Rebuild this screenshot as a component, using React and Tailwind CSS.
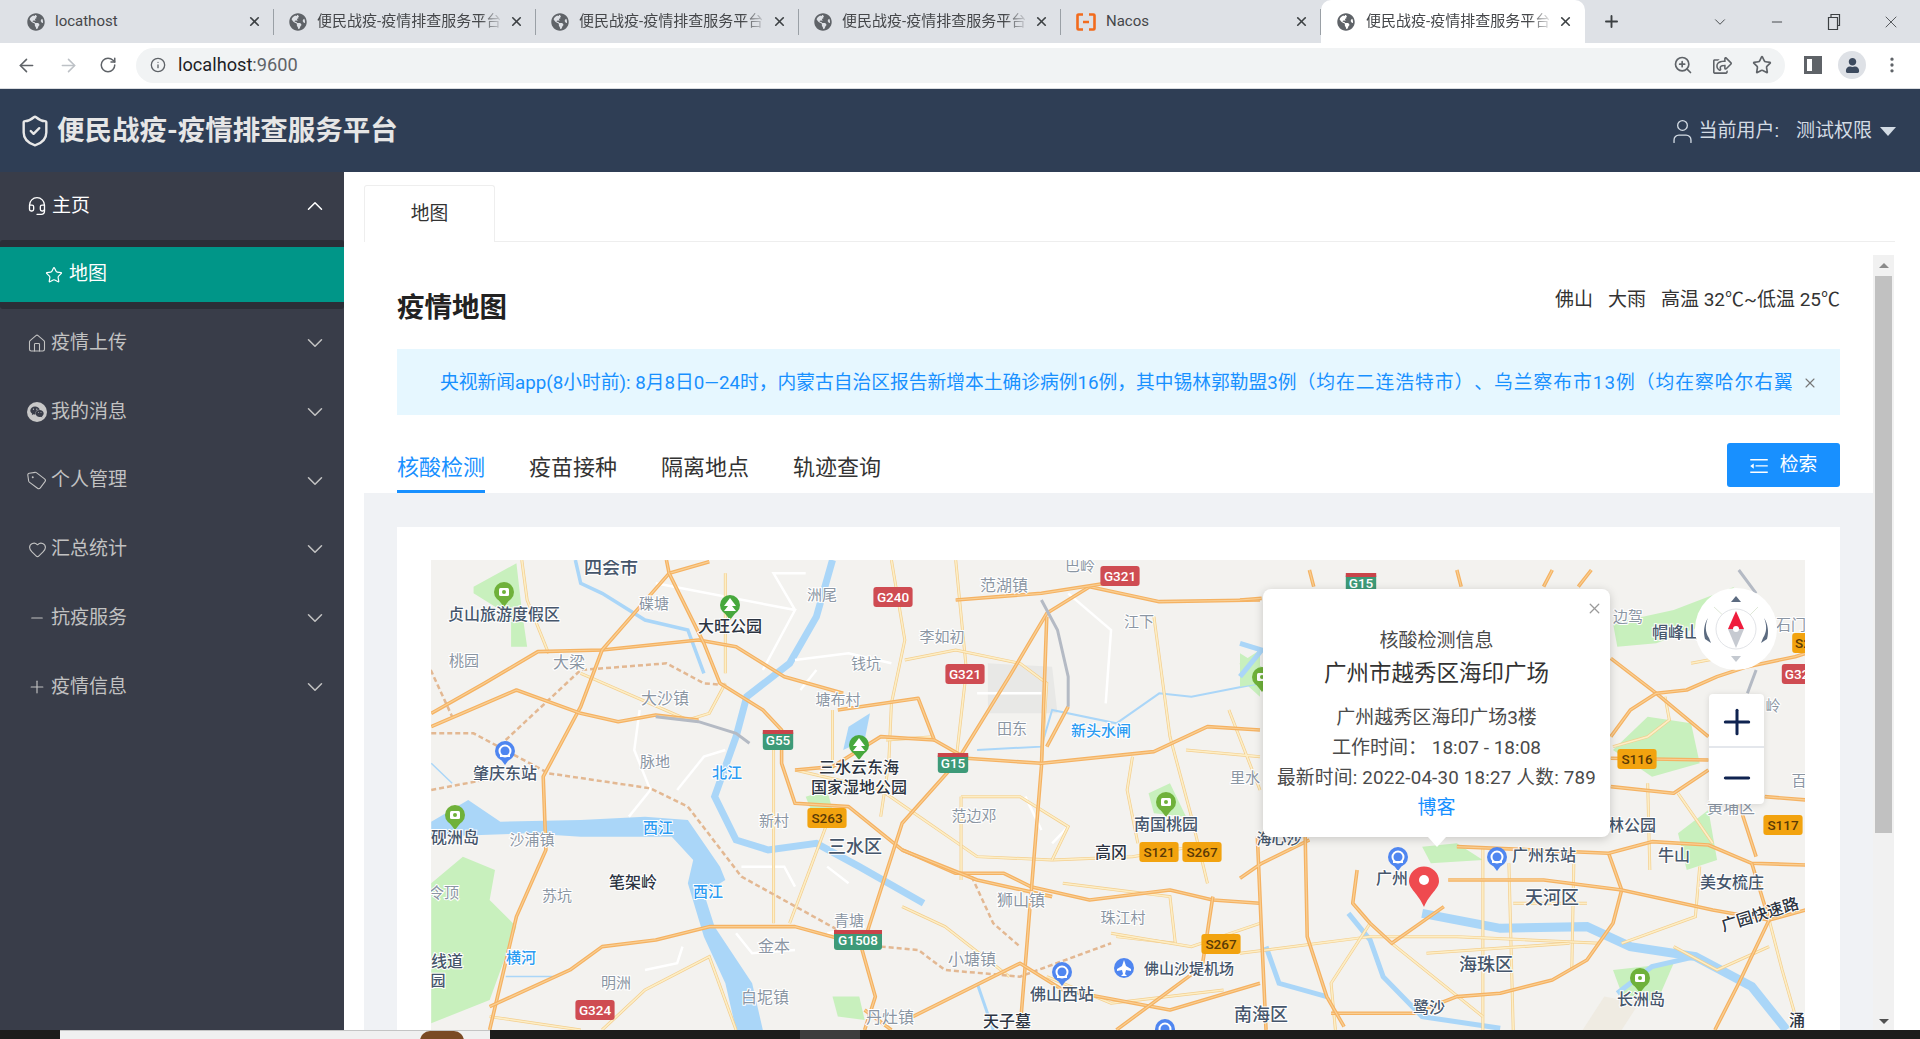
import {
  ArrowLeft,
  ArrowRight,
  ChevronDown,
  ChevronUp,
  Heart,
  Headset,
  House,
  Info,
  Minus,
  MoreVertical,
  Plus,
  RotateCw,
  ShieldCheck,
  Star,
  Tag,
  User,
  X,
  ZoomIn,
} from "lucide-react";
import { FaGlobeAmericas, FaRegShareSquare, FaUser, FaWeixin } from "react-icons/fa";

const cjk = "font-['Roboto','Noto_Sans_CJK_SC',sans-serif]";
const title = "便民战疫-疫情排查服务平台";

const browserTabs = [
  { label: "locathost", width: "w-[262px]", plain: true },
  { label: title, width: "w-[262px]" },
  { label: title, width: "w-[263px]" },
  { label: title, width: "w-[262px]" },
  { label: "Nacos", width: "w-[260px]", nacos: true, plain: true },
];

const menu = [
  { label: "疫情上传", icon: <House size={23} strokeWidth={1.3} /> },
  {
    label: "我的消息",
    icon: (
      <span className="flex h-[20px] w-[20px] items-center justify-center rounded-full bg-[#c8c8c8] text-[#393d49]">
        <FaWeixin size={14} />
      </span>
    ),
  },
  { label: "个人管理", icon: <Tag size={21} strokeWidth={1.3} className="rotate-[-8deg]" /> },
  { label: "汇总统计", icon: <Heart size={19} strokeWidth={1.4} /> },
  { label: "抗疫服务", icon: <Minus size={18} strokeWidth={1.5} /> },
  { label: "疫情信息", icon: <Plus size={20} strokeWidth={1.4} /> },
];

const labels = [
  ["四会市", 611, 574, 18, "d"],
  ["贞山旅游度假区", 504, 620, 16, "d"],
  ["桃园", 464, 666, 15, "g"],
  ["大梁", 569, 668, 16, "g"],
  ["碟塘", 654, 609, 15, "g"],
  ["大旺公园", 730, 632, 16, "k"],
  ["洲尾", 822, 600, 15, "g"],
  ["范湖镇", 1004, 591, 16, "g"],
  ["巴岭", 1080, 571, 15, "g"],
  ["李如初", 942, 642, 15, "g"],
  ["钱坑", 866, 669, 15, "g"],
  ["江下", 1139, 627, 15, "g"],
  ["塘布村", 838, 705, 15, "g"],
  ["大沙镇", 665, 704, 16, "g"],
  ["田东", 1012, 734, 15, "g"],
  ["新头水闸", 1101, 736, 15, "b"],
  ["脉地", 655, 767, 15, "g"],
  ["北江", 727, 778, 15, "b"],
  ["肇庆东站", 505, 779, 16, "d"],
  ["三水云东海", 859, 773, 16, "k"],
  ["国家湿地公园", 859, 793, 16, "k"],
  ["里水", 1245, 783, 15, "g"],
  ["范边邓", 974, 821, 15, "g"],
  ["南国桃园", 1166, 830, 16, "d"],
  ["砚洲岛", 455, 843, 16, "d"],
  ["沙浦镇", 532, 845, 15, "g"],
  ["西江", 658, 833, 15, "b"],
  ["新村", 774, 826, 15, "g"],
  ["三水区", 855, 853, 18, "d"],
  ["高冈", 1111, 858, 16, "k"],
  ["笔架岭", 633, 888, 16, "k"],
  ["苏坑", 557, 901, 15, "g"],
  ["西江", 708, 897, 15, "b"],
  ["令顶", 444, 898, 15, "g"],
  ["狮山镇", 1021, 906, 16, "g"],
  ["珠江村", 1123, 923, 15, "g"],
  ["青塘", 849, 926, 15, "g"],
  ["金本", 774, 952, 16, "g"],
  ["小塘镇", 972, 965, 16, "g"],
  ["佛山沙堤机场", 1189, 974, 15, "d"],
  ["横河", 521, 963, 15, "b"],
  ["线道", 447, 967, 16, "d"],
  ["园", 438, 986, 15, "d"],
  ["明洲", 616, 988, 15, "g"],
  ["佛山西站", 1062, 1000, 16, "d"],
  ["白坭镇", 765, 1003, 16, "g"],
  ["丹灶镇", 890, 1023, 16, "g"],
  ["天子墓", 1007, 1027, 16, "k"],
  ["南海区", 1261, 1021, 18, "d"],
  ["边驾", 1628, 622, 15, "g"],
  ["帽峰山", 1676, 638, 16, "d"],
  ["石门", 1791, 630, 15, "g"],
  ["岭", 1773, 711, 15, "g"],
  ["百", 1799, 786, 15, "g"],
  ["黄埔区", 1731, 813, 16, "g"],
  ["林公园", 1632, 831, 16, "d"],
  ["牛山", 1674, 861, 16, "d"],
  ["广州东站", 1544, 861, 16, "d"],
  ["广州", 1392, 884, 16, "d"],
  ["天河区", 1552, 904, 18, "d"],
  ["美女梳庄", 1732, 888, 16, "d"],
  ["海珠区", 1486, 971, 18, "d"],
  ["鹭沙", 1429, 1013, 16, "d"],
  ["长洲岛", 1641, 1005, 16, "d"],
  ["涌", 1797, 1026, 16, "k"],
  ["海心沙", 1279, 844, 15, "d"],
];

const labelColor = { d: "#46566b", k: "#2c3441", g: "#8b96a3", b: "#2b9bf2" };

const shields = [
  ["G321", 1120, 576, "r"],
  ["G240", 893, 597, "r"],
  ["G321", 965, 674, "r"],
  ["G55", 778, 740, "g"],
  ["G15", 953, 763, "g"],
  ["G15", 1361, 583, "g"],
  ["S263", 827, 818, "o"],
  ["S121", 1159, 852, "o"],
  ["S267", 1202, 852, "o"],
  ["S267", 1221, 944, "o"],
  ["G1508", 858, 940, "g"],
  ["G324", 595, 1010, "r"],
  ["S116", 1637, 759, "o"],
  ["S117", 1783, 825, "o"],
  ["G32", 1797, 674, "r"],
  ["S2", 1803, 643, "o"],
];

const pois = [
  [504, 592, "#6fb13a", false],
  [730, 605, "#47a83d", true],
  [859, 745, "#47a83d", true],
  [455, 815, "#6fb13a", false],
  [1166, 802, "#6fb13a", false],
  [1640, 978, "#6fb13a", false],
  [1262, 677, "#6fb13a", false],
];

const stations = [
  [505, 751],
  [1062, 972],
  [1398, 857],
  [1497, 857],
  [1165, 1029],
];

// paths are written in the coordinates of the two map crops, scaled back by the <g> transforms
const leftMajor = [
  "M21 490L120 400L220 305L340 300L520 270L590 290L680 380L790 430",
  "M460 30L465 70L340 300L300 470L230 680L235 900L180 1100L130 1440",
  "M465 70L540 35",
  "M465 70L530 280L560 400L640 480L675 540L675 640L700 760L800 770L900 900L1000 970L1090 970L1140 1010L1250 1050L1400 1020L1480 1050L1568 1060",
  "M21 530L180 420L300 490L370 515L440 495L520 510",
  "M130 1370L280 1260L340 1190L440 1170L540 1130L700 1130L780 1165",
  "M830 1170L900 820L1000 640L1100 380L1170 190L1250 110L1380 155L1568 150",
  "M1120 1440L1160 650L1170 200",
  "M780 480L930 445L960 570L1020 625L1160 640L1370 605L1470 530L1568 540",
  "M1210 470L1170 590",
  "M900 900L1040 990L1180 1040",
  "M830 1380L880 1440M820 1170L850 1340L830 1440",
  "M920 1400L1120 1240L1200 1320L1400 1380L1568 1300",
  "M1480 1040L1460 1250L1300 1440",
  "M1000 150L1160 130L1280 100",
  "M700 660L770 650L860 560L960 570",
];

const leftMinor = [
  "M190 30L200 150L240 310M300 370L500 510L540 490L570 400",
  "M570 370L570 70M1000 30L1020 360L1000 640",
  "M880 30L905 270L880 460L875 640L860 800",
  "M905 330L1000 300L1120 340L1170 400L1160 640",
  "M1370 200L1400 560L1440 800L1470 1000",
  "M660 560L660 1120M760 820L690 1120",
  "M700 660L860 720L1040 920L1180 930L1330 920L1480 880",
  "M1010 740L1120 740L1210 830L1180 930",
  "M1010 740L1010 990",
  "M1330 620L1320 720L1340 880",
  "M1200 1000L1400 1040L1410 1180L1300 1160",
  "M900 1070L980 1130L1100 1280",
  "M590 1440L540 1220L420 1320L340 1440",
  "M870 570L960 560M770 640L770 480",
  "M130 1400L300 1440",
  "M1290 1150L1440 1190L1568 1120",
  "M1170 1280L1290 1360L1500 1320",
  "M1430 600L1568 620M1510 480L1568 720",
];

const leftWhite = [
  "M440 100L700 180L640 360M700 180L660 70L720 70",
  "M410 480L400 600L430 720L390 800",
  "M480 720L530 620L570 600",
  "M1210 130L1290 240L1280 460",
  "M1130 740L1160 840M1180 880L1210 830",
  "M600 950L680 950L700 1010M590 1150L620 1210L700 1200",
  "M490 1190L480 1240L420 1260M760 950L800 1000",
  "M700 330L800 310L880 340M710 420L740 360",
  "M1040 430L1160 430",
  "M760 1150L830 1130",
];

const rail = [
  "M21 550L100 550L240 670L430 715L500 770L600 980L690 1060L780 1140",
  "M860 1190L930 1200L980 1260L1120 1280L1290 1180",
  "M20 360L60 500M160 570L300 360L460 340L530 400L570 405",
  "M21 720L120 690",
  "M1030 980L1070 1120L1120 1190",
];

const rightMajor = [
  "M855 265L960 370L1080 500",
  "M855 500L900 420L960 370L1030 360L1100 320L1170 290L1280 260L1305 250",
  "M855 650L1000 670L1080 600M855 565L1080 570",
  "M0 925L50 880L160 810M40 800L50 1100L60 1380",
  "M850 850L880 960L860 1060L800 1170L720 1230L600 1270L500 1280L400 1330L210 1330",
  "M500 830L850 850L950 815L1080 825L1180 880L1305 885",
  "M480 930L700 930L880 960L1090 1020L1220 1050L1305 1020",
  "M1180 880L1220 1050L1150 1240L1095 1380",
  "M150 780L155 1100L200 1280L240 1370",
  "M270 900L260 1000L300 1060L350 1120L470 1010",
  "M160 0L170 50M500 0L510 50M700 50L720 0M780 50L810 0",
  "M1150 700L1190 860M1210 680L1305 690",
  "M0 90L50 85",
];

const rightMinor = [
  "M560 830L560 1380M770 860L765 1200M620 880L630 1380",
  "M940 640L945 900M1010 670L1090 820",
  "M0 1150L300 1100L500 1100L830 1120M350 1120L560 1340",
  "M880 1120L1050 1040L1060 890M1220 1050L1250 1200L1290 1380",
  "M980 380L990 450L940 500L860 530",
  "M300 1060L210 1240L220 1380",
  "M1040 280L1120 260",
  "M430 1150L760 1120M630 1000L800 1000",
  "M1000 1130L1100 1200L1220 1130",
];

const rightRiver = [
  "M250 1030L300 1110L330 1220L420 1340L600 1375",
  "M420 1030L600 1075L800 1070L900 1130L1050 1160L1180 1250L1260 1380",
  "M870 1270L950 1190L1050 1160",
  "M0 220L50 240L0 320",
  "M60 1130L90 1240L200 1280",
];

function Roads({ major = [], minor = [], white = [], dashed = [], river = [] }) {
  return (
    <>
      {river.map((d, i) => (
        <path key={i} d={d} fill="none" stroke="#aad6f8" strokeWidth={i === 1 ? 9 : 5} vectorEffect="non-scaling-stroke" />
      ))}
      {white.map((d, i) => (
        <path key={i} d={d} fill="none" stroke="#ffffff" strokeWidth="2.5" vectorEffect="non-scaling-stroke" />
      ))}
      {minor.map((d, i) => (
        <g key={i}>
          <path d={d} fill="none" stroke="#f3cf8f" strokeWidth="3" vectorEffect="non-scaling-stroke" />
          <path d={d} fill="none" stroke="#fdeec6" strokeWidth="1.6" vectorEffect="non-scaling-stroke" />
        </g>
      ))}
      {dashed.map((d, i) => (
        <path key={i} d={d} fill="none" stroke="#e3b892" strokeWidth="2.5" strokeDasharray="5 3" vectorEffect="non-scaling-stroke" />
      ))}
      {major.map((d, i) => (
        <g key={i}>
          <path d={d} fill="none" stroke="#f5b262" strokeWidth="3.600" strokeLinejoin="round" vectorEffect="non-scaling-stroke" />
          <path d={d} fill="none" stroke="#f9cf94" strokeWidth="1.200" strokeLinejoin="round" vectorEffect="non-scaling-stroke" />
        </g>
      ))}
    </>
  );
}

function MapDrawing() {
  return (
    <svg viewBox="431 560 1374 470" className="block h-[470px] w-[1374px]">
      <rect x="431" y="560" width="1374" height="470" fill="#f3f2ef" />

      {/* left crop: scale back to page pixels */}
      <g transform="translate(420 550) scale(0.5357 0.3333)">
        <path d="M21 1000L80 920L140 960L130 1050L180 1130L130 1350L21 1420Z" fill="#c8f0bd" />
        <path d="M100 110L180 40L190 180L200 290L170 290L170 200L100 130Z" fill="#c8f0bd" />
        <path d="M1360 730L1400 700L1430 800L1370 790Z" fill="#c8f0bd" />
        <path d="M720 740L760 720L770 780L730 780Z" fill="#c8f0bd" />
        <path d="M770 1340L820 1340L830 1410L780 1400Z" fill="#c8f0bd" />
        <path d="M1530 340L1568 300L1568 440L1540 400Z" fill="#c8f0bd" />
        <path d="M1060 340L1180 350L1190 490L1060 490Z" fill="#e8e8e6" />
        <path d="M800 530L840 490L830 570L790 600Z" fill="#aad6f8" />

        {/* 西江 */}
        <path
          d="M21 815L90 750L150 815L300 810L420 800L500 810L560 950L570 990L530 1030L550 1130L620 1300L640 1440L590 1440L570 1300L530 1160L500 1000L510 930L470 860L300 860L200 850L21 860Z"
          fill="#aad6f8"
        />
        {/* 北江 */}
        <path
          d="M770 30L740 200L690 340L610 440L590 560L550 740L590 870L650 900L740 880L820 950L940 1060"
          fill="none"
          stroke="#aad6f8"
          strokeWidth="7"
          vectorEffect="non-scaling-stroke"
        />
        <path d="M290 30L300 100L340 130L420 210L500 240L530 370" fill="none" stroke="#aad6f8" strokeWidth="3.5" vectorEffect="non-scaling-stroke" />
        <path d="M1040 600L1160 590L1180 480L1300 520L1380 430L1440 440L1568 400" fill="none" stroke="#aad6f8" strokeWidth="2" vectorEffect="non-scaling-stroke" />
        <path d="M1040 1300L1070 1440" fill="none" stroke="#aad6f8" strokeWidth="3" vectorEffect="non-scaling-stroke" />
        <path d="M21 640L60 700M160 1280L250 1280" fill="none" stroke="#aad6f8" strokeWidth="1.5" vectorEffect="non-scaling-stroke" />

        <Roads white={leftWhite} minor={leftMinor} dashed={rail} major={leftMajor} />
        <path d="M1160 150L1190 240L1210 380L1210 470" fill="none" stroke="#b4bac4" strokeWidth="3" vectorEffect="non-scaling-stroke" />
        <path d="M440 500L520 515L590 550L615 580" fill="none" stroke="#b4bac4" strokeWidth="3" vectorEffect="non-scaling-stroke" />
      </g>

      {/* right crop */}
      <g transform="translate(1240 570) scale(0.4337 0.3333)">
        <path d="M860 160L1000 120L1140 50L1060 170L960 220L870 230Z" fill="#c8f0bd" />
        <path d="M940 440L1040 460L1060 580L950 620L860 540Z" fill="#c8f0bd" />
        <path d="M420 830L500 820L560 870L440 880Z" fill="#c8f0bd" />
        <path d="M1010 790L1080 720L1100 870L1030 900Z" fill="#c8f0bd" />
        <path d="M860 1200L1000 1180L960 1300L880 1270Z" fill="#c8f0bd" />
        <path d="M0 250L50 290L50 340L0 350Z" fill="#c8f0bd" />
        <path d="M840 1280L920 1300L880 1380L790 1380Z" fill="#efebe2" />
        <Roads river={rightRiver} minor={rightMinor} major={rightMajor} />
        <path d="M1150 0L1190 70M1190 300L1170 370" fill="none" stroke="#b4bac4" strokeWidth="3" vectorEffect="non-scaling-stroke" />
      </g>

      {pois.map(([x, y, color, tree], i) => (
        <g key={i}>
          <path d={`M${x} ${y + 15}L${x - 7} ${y + 6}H${x + 7}Z`} fill={color} />
          <circle cx={x} cy={y} r="10" fill={color} />
          {tree ? (
            <path d={`M${x} ${y - 7}l6 8h-4l4 5h-12l4-5h-4z`} fill="#ffffff" />
          ) : (
            <>
              <rect x={x - 5} y={y - 4} width="10" height="8" rx="1.500" fill="#ffffff" />
              <circle cx={x} cy={y} r="2" fill={color} />
            </>
          )}
        </g>
      ))}

      {stations.map(([x, y], i) => (
        <g key={i}>
          <circle cx={x} cy={y} r="10" fill="#4f86f0" />
          <path d={`M${x} ${y + 14}L${x - 6} ${y + 6}H${x + 6}Z`} fill="#4f86f0" />
          <circle cx={x} cy={y} r="5.500" fill="none" stroke="#ffffff" strokeWidth="2" />
          <rect x={x - 5} y={y + 4} width="10" height="2" fill="#ffffff" />
        </g>
      ))}

      {labels.map(([text, x, y, size, tone], i) => (
        <text
          key={i}
          x={x}
          y={y}
          fontSize={size}
          fontFamily="'Noto Sans CJK SC', sans-serif"
          fontWeight={tone === "g" ? 400 : 500}
          fill={labelColor[tone]}
          stroke="#ffffff"
          strokeWidth="2"
          paintOrder="stroke"
          textAnchor="middle"
        >
          {text}
        </text>
      ))}
      <text
        x="1760"
        y="920"
        fontSize="16"
        fontFamily="'Noto Sans CJK SC', sans-serif"
        fontWeight="500"
        fill="#2c3441"
        stroke="#ffffff"
        strokeWidth="2"
        paintOrder="stroke"
        textAnchor="middle"
        transform="rotate(-17 1760 915)"
      >
        广园快速路
      </text>

      {shields.map(([text, x, y, tone], i) => (
        <g key={i}>
          <rect
            x={x - (text.length * 4.4 + 2)}
            y={y - 10}
            width={text.length * 8.8 + 4}
            height="20"
            rx="3"
            fill={tone === "r" ? "#cf4c52" : tone === "g" ? "#3d9a78" : "#f2a30f"}
          />
          {tone === "g" && <rect x={x - (text.length * 4.4 + 2)} y={y - 10} width={text.length * 8.8 + 4} height="4" fill="#c9444a" />}
          <text
            x={x}
            y={y + 5}
            fontSize="13.5"
            fontFamily="'Roboto', sans-serif"
            fontWeight="500"
            fill={tone === "o" ? "#5a3a06" : "#ffffff"}
            textAnchor="middle"
          >
            {text}
          </text>
        </g>
      ))}

      {/* airport */}
      <circle cx="1124" cy="968" r="10" fill="#4f86f0" />
      <path d="M1124 960l2 6 5 3v2l-5-1-1 4 2 2h-6l2-2-1-4-5 1v-2l5-3z" fill="#ffffff" />

      {/* marker */}
      <path d="M1424 907C1418 893 1409 889 1409 881a15 14.500 0 0 1 30 0C1439 889 1430 893 1424 907Z" fill="#ef4a4f" />
      <circle cx="1424" cy="880" r="5" fill="#ffffff" />
    </svg>
  );
}

function Compass() {
  return (
    <svg viewBox="0 0 84 84" className="h-[84px] w-[84px]">
      <circle cx="42" cy="42" r="41" fill="#ffffff" />
      <path d="M20 20L33 32M64 20L52 32" stroke="#dfe8d8" strokeWidth="1" />
      <circle cx="42" cy="42" r="20" fill="#ffffff" stroke="#e2e4e8" strokeWidth="1" />
      <path d="M42 9l5 6h-10z" fill="#5c6b80" />
      <path d="M42 75l5-6h-10z" fill="#c4c9d0" />
      <path d="M42 24l8 18h-16z" fill="#ef1c3c" />
      <path d="M42 61l-8-19h16z" fill="#c6cad1" />
      <circle cx="42" cy="42" r="3" fill="#ffffff" />
      <path d="M14 31c-3 7-3 14 1 20l2 5-6-4c-2-7-1-15 3-21z" fill="#5c6b80" />
      <path d="M70 31c3 7 3 14-1 20l-2 5 6-4c2-7 1-15-3-21z" fill="#5c6b80" />
    </svg>
  );
}

function NacosIcon() {
  return (
    <svg viewBox="0 0 20 18" className="h-[18px] w-[20px] shrink-0 fill-none stroke-[#f26b1d]" strokeWidth="2.600">
      <path d="M7 1.500H2.500a1 1 0 0 0-1 1v13a1 1 0 0 0 1 1H7M13 1.500h4.500a1 1 0 0 1 1 1v13a1 1 0 0 1-1 1H13M7 9h6" />
    </svg>
  );
}

function BrowserTab({ tab }) {
  return (
    <div className={`relative flex h-[43px] items-center pl-[15px] pr-[12px] ${tab.width}`}>
      {tab.nacos ? <NacosIcon /> : <FaGlobeAmericas size={18} className="shrink-0 text-[#5f6368]" />}
      <span
        className={`ml-[10px] flex-1 overflow-hidden text-[15px] whitespace-nowrap text-[#45474a] ${tab.plain ? "" : "[mask-image:linear-gradient(to_left,transparent,black_24px)]"}`}
      >
        {tab.label}
      </span>
      <X size={15} strokeWidth={2.6} className="ml-[5px] shrink-0 text-[#3c4043]" />
      <span className="absolute right-0 h-[26px] w-px bg-[#9aa0a6]" />
    </div>
  );
}

function ChromeBar() {
  return (
    <div className={`shrink-0 ${cjk}`}>
      <div className="flex h-[43px] items-center bg-[#dee1e6] pl-[12px]">
        {browserTabs.map((tab, i) => (
          <BrowserTab key={i} tab={tab} />
        ))}
        <div className="flex h-[43px] w-[264px] items-center rounded-t-[10px] bg-white pl-[16px] pr-[12px]">
          <FaGlobeAmericas size={18} className="shrink-0 text-[#5f6368]" />
          <span className="ml-[11px] flex-1 overflow-hidden text-[15px] whitespace-nowrap text-[#45474a] [mask-image:linear-gradient(to_left,transparent,black_24px)]">
            {title}
          </span>
          <X size={15} strokeWidth={2.6} className="ml-[5px] shrink-0 text-[#3c4043]" />
        </div>
        <Plus size={19} strokeWidth={2.4} className="ml-[17px] text-[#3c4043]" />
        <ChevronDown size={18} strokeWidth={1.2} className="ml-[90px] text-[#3c4043]" />
        <Minus size={16} strokeWidth={1.4} className="ml-[40px] text-[#3c4043]" />
        <svg viewBox="0 0 14 18" className="ml-[42px] h-[18px] w-[14px] fill-none stroke-[#3c4043]">
          <path d="M1.500 4.500h9v12h-9zM4 4.500V1.500h8.500v11h-2" strokeWidth="1.2" />
        </svg>
        <X size={20} strokeWidth={1} className="ml-[40px] text-[#3c4043]" />
      </div>
      <div className="flex h-[46px] items-center border-b border-[#dadce0] bg-white pb-[1px]">
        <ArrowLeft size={21} strokeWidth={1.8} className="ml-[16px] text-[#5f6368]" />
        <ArrowRight size={21} strokeWidth={1.8} className="ml-[21px] text-[#bdc1c6]" />
        <RotateCw size={18} strokeWidth={2} className="ml-[20px] text-[#5f6368]" />
        <div className="ml-[19px] flex h-[35px] w-[1649px] items-center rounded-full bg-[#f1f3f4]">
          <Info size={16} strokeWidth={2} className="ml-[14px] text-[#5f6368]" />
          <span className="ml-[12px] text-[18.200px] text-[#202124]">
            localhost<span className="text-[#5f6368]">:9600</span>
          </span>
          <div className="ml-auto flex items-center gap-[20px] pr-[13px] text-[#5f6368]">
            <ZoomIn size={20} strokeWidth={2} />
            <FaRegShareSquare size={19} />
            <Star size={20} strokeWidth={2} />
          </div>
        </div>
        <span className="ml-[19px] flex h-[18px] w-[18px] justify-end border-[3px] border-[#5f6368]">
          <span className="w-[7px] bg-[#5f6368]" />
        </span>
        <span className="ml-[16px] flex h-[28px] w-[28px] items-center justify-center rounded-full bg-[#dee1e6] text-[#3c4a5e]">
          <FaUser size={15} />
        </span>
        <MoreVertical size={20} strokeWidth={2} className="ml-[16px] text-[#5f6368]" />
      </div>
    </div>
  );
}

function SiteHeader() {
  return (
    <header className="flex h-[83px] shrink-0 items-center bg-[#2f3e55] pl-[18px] pr-[24px]">
      <ShieldCheck size={34} strokeWidth={1.7} className="text-[#e8e8e8]" />
      <h1 className="ml-[5px] text-[27.500px] font-bold text-[#e6e6e6]">{title}</h1>
      <div className="ml-auto flex items-center pt-[1px] text-[19px] text-[#d3dbe4]">
        <User size={29} strokeWidth={1.1} />
        <span className="ml-[1px]">当前用户:</span>
        <span className="ml-[17px]">测试权限</span>
        <span className="ml-[8px] h-0 w-0 border-x-[8px] border-t-[9px] border-x-transparent border-t-[#d3dbe4]" />
      </div>
    </header>
  );
}

function Sidebar() {
  return (
    <aside className="w-[344px] shrink-0 bg-[#393d49] text-[19px]">
      <div className="flex h-[68px] items-center pl-[27px] pr-[16px] text-white">
        <Headset size={20} strokeWidth={1.6} />
        <span className="ml-[5px]">主页</span>
        <ChevronUp size={26} strokeWidth={1.4} className="ml-auto" />
      </div>
      <div className="rounded-[3px] bg-[#2b2e37] py-[7px]">
        <div className="flex h-[55px] items-center bg-[#009688] pl-[45px] text-white">
          <Star size={18} strokeWidth={1.6} />
          <span className="ml-[6px]">地图</span>
        </div>
      </div>
      {menu.map((item) => (
        <div key={item.label} className="flex h-[68.700px] items-center pl-[27px] pr-[16px] text-[#c2c2c2]">
          <span className="flex w-[20px] items-center justify-center">{item.icon}</span>
          <span className="ml-[4px]">{item.label}</span>
          <ChevronDown size={26} strokeWidth={1.4} className="ml-auto" />
        </div>
      ))}
    </aside>
  );
}

function MapPopup() {
  return (
    <div className="absolute top-[29px] left-[832px] h-[248px] w-[347px] rounded-[8px] bg-white text-center text-[19px] leading-[30px] text-[#4a4a4a] shadow-[0_2px_10px_rgba(0,0,0,0.18)]">
      <X size={17} strokeWidth={1.8} className="absolute top-[11px] right-[7px] text-[#9a9a9a]" />
      <p className="pt-[37px]">核酸检测信息</p>
      <p className="text-[22.500px] leading-[34px] text-[#333]">广州市越秀区海印广场</p>
      <p className="mt-[13px]">广州越秀区海印广场3楼</p>
      <p>工作时间： 18:07 - 18:08</p>
      <p className="text-[18.750px] tracking-[0.2px] whitespace-nowrap">最新时间: 2022-04-30 18:27 人数: 789</p>
      <p className="text-[#1890ff]">博客</p>
      <span className="absolute top-full left-[165px] h-0 w-0 border-x-[9px] border-t-[10px] border-x-transparent border-t-white" />
    </div>
  );
}

function MapCard() {
  return (
    <div className="mx-[33px] bg-white pt-[33px] pl-[34px]">
      <div className="relative h-[470px] w-[1374px] overflow-hidden">
        <MapDrawing />
        <MapPopup />
        <div className="absolute top-[27px] left-[1263px]">
          <Compass />
        </div>
        <div className="absolute top-[134px] left-[1278px] w-[55px] rounded-[4px] bg-white text-[#0f2350] shadow-[0_1px_6px_rgba(0,0,0,0.12)]">
          <div className="flex h-[54px] items-center justify-center border-b-2 border-[#e4e7ec] pt-[4px]">
            <Plus size={40} strokeWidth={1.8} />
          </div>
          <div className="flex h-[56px] items-center justify-center pt-[4px]">
            <Minus size={40} strokeWidth={1.8} />
          </div>
        </div>
      </div>
    </div>
  );
}

function Scrollbar() {
  return (
    <div className="relative mt-[13px] w-[21px] shrink-0 bg-[#f1f1f1] px-[2px] pt-[21px]">
      <span className="absolute top-[8px] left-[6px] h-0 w-0 border-x-[5px] border-b-[5px] border-x-transparent border-b-[#8a8a8a]" />
      <div className="h-[557px] bg-[#c1c1c1]" />
      <span className="absolute bottom-[6px] left-[6px] h-0 w-0 border-x-[5px] border-t-[5px] border-x-transparent border-t-[#505050]" />
    </div>
  );
}

function Content() {
  return (
    <main className="flex min-w-0 flex-1 flex-col pl-[20px] pr-[25px] pt-[13px]">
      <div className="h-[57px] shrink-0 border-b border-[#eeeeee]">
        <div className="flex h-[57px] w-[131px] items-center justify-center rounded-t-[3px] border-x border-t border-[#eeeeee] bg-white text-[18.750px] text-[#333]">
          地图
        </div>
      </div>
      <div className="flex min-h-0 flex-1">
        <div className="w-[1509px] shrink-0 overflow-hidden">
          <div className="px-[33px]">
            <div className="flex items-start justify-between pt-[46px]">
              <h2 className="text-[27.500px] leading-[40px] font-semibold text-[#222]">疫情地图</h2>
              <div className="mt-[-3px] flex gap-[15px] text-[19px] leading-[30px] text-[#333]">
                <span>佛山</span>
                <span>大雨</span>
                <span>高温 32℃~低温 25℃</span>
              </div>
            </div>
            <div className="mt-[21px] flex h-[66px] items-center bg-[#e6f7ff] pl-[43px] pr-[22px] pt-[2px] text-[18.750px] text-[#1890ff] [text-spacing-trim:space-all]">
              <div className="flex-1 overflow-hidden whitespace-nowrap">
                央视新闻app(8小时前): 8月8日0—24时，内蒙古自治区报告新增本土确诊病例16例，其中锡林郭勒盟3例
                <span className="tracking-[1px]">（均在二连浩特市）、乌兰察布市13例（均在察哈尔右翼前旗）</span>
              </div>
              <X size={16} strokeWidth={1.6} className="ml-[10px] shrink-0 text-[#777]" />
            </div>
            <div className="mt-[28px] flex h-[50px] items-start justify-between">
              <div className="flex gap-[44px] text-[22px] leading-[50px] text-[#333]">
                <span className="relative text-[#1890ff]">
                  核酸检测
                  <span className="absolute inset-x-0 bottom-0 h-[3px] bg-[#1890ff]" />
                </span>
                <span>疫苗接种</span>
                <span>隔离地点</span>
                <span>轨迹查询</span>
              </div>
              <button className="flex h-[44px] w-[113px] items-center justify-center gap-[12px] rounded-[3px] bg-[#1890ff] pt-[1px] text-[18.750px] text-white">
                <svg viewBox="0 0 20 16" className="h-[14px] w-[18px] fill-white">
                  <path d="M0 0h20v1.600H0zM6 7h14v1.600H6zM0 14.400h20V16H0zM0 8l4-3v6z" />
                </svg>
                检索
              </button>
            </div>
          </div>
          <div className="h-[600px] bg-[#f0f2f5] pt-[34px]">
            <MapCard />
          </div>
        </div>
        <Scrollbar />
      </div>
    </main>
  );
}

function Taskbar() {
  return (
    <div className="flex h-[9px] shrink-0 bg-[#1c1c1c]">
      <div className="ml-[60px] flex h-[9px] w-[430px] justify-end border-t border-[#c4c4c4] bg-[#f0f0f0] pr-[26px]">
        <span className="h-[10px] w-[44px] rounded-t-full bg-[#7a4a24]" />
      </div>
      <div className="ml-[310px] h-[9px] w-[60px] bg-[#3e3e3e]" />
    </div>
  );
}

export default function App() {
  return (
    <div className={`flex h-[1039px] w-[1920px] flex-col overflow-hidden bg-white ${cjk}`}>
      <ChromeBar />
      <SiteHeader />
      <div className="flex min-h-0 flex-1">
        <Sidebar />
        <Content />
      </div>
      <Taskbar />
    </div>
  );
}
